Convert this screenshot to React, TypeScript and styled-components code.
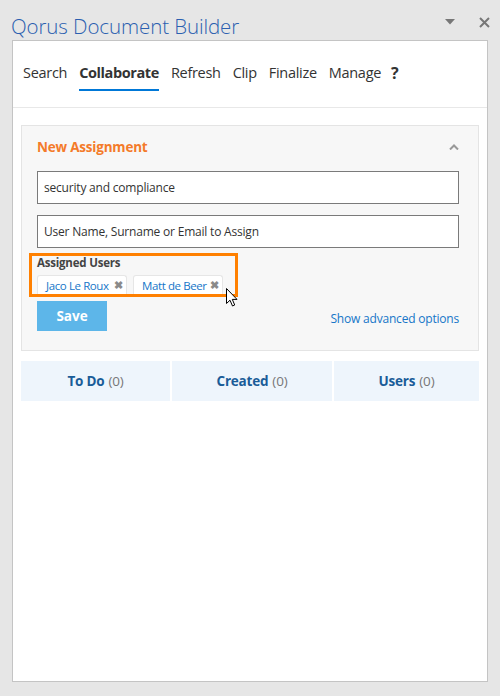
import React from 'react';
import styled, { createGlobalStyle } from 'styled-components';

const Global = createGlobalStyle`
  html, body {
    margin: 0;
    padding: 0;
    background: #e6e6e6;
    font-family: "Open Sans", "Noto Sans", "Liberation Sans", sans-serif;
  }
`;

const Shell = styled.div` /* fondo gris del task pane */
  width: 500px;
  height: 696px;
  background: #e6e6e6;
  display: flex;
  flex-direction: column;
  position: relative;
`;

const TitleBar = styled.div`
  height: 40px;
  display: flex;
  align-items: center;
  padding: 0 10px 0 11px;
  box-sizing: border-box;
`;

const Title = styled.h1`
  flex: 1;
  margin: 0;
  font-size: 20.5px;
  font-weight: 300;
  color: #2b5fb0;
  letter-spacing: -0.1px;
  padding-top: 12px;
`;

const TitleIcons = styled.div`
  display: flex;
  align-items: center;
  gap: 24px;
  color: #777;
  padding-top: 4px;
`;

const Pane = styled.div`
  margin: 0 12px 0 12px;
  height: 642px;
  background: #fff;
  border: 1px solid #c4c4c4;
  box-sizing: border-box;
  display: flex;
  flex-direction: column;
`;

const Nav = styled.nav`
  height: 66px;
  display: flex;
  align-items: flex-end;
  gap: 12px;
  padding: 0 10px;
  border-bottom: 1px solid #e8e8e8;
`;

const NavItem = styled.div<{ $active?: boolean }>`
  font-size: 14.5px;
  color: #333;
  font-weight: ${p => (p.$active ? 700 : 400)};
  letter-spacing: ${p => (p.$active ? '-0.4px' : '-0.3px')};
  padding-bottom: 6px;
  margin-bottom: 16px;
  border-bottom: 2px solid ${p => (p.$active ? '#0078d7' : 'transparent')};
  line-height: 20px;
`;

const Help = styled(NavItem)`
  font-weight: 700;
  font-size: 16px;
  margin-left: -2px;
`;

const Body = styled.div`
  padding: 17px 8px 0 8px;
  display: flex;
  flex-direction: column;
`;

const Card = styled.section`
  background: #f7f7f7;
  border: 1px solid #e4e4e4;
  padding: 10px 19px 19px 15px;
  display: flex;
  flex-direction: column;
`;

const CardHead = styled.div`
  display: flex;
  align-items: center;
  justify-content: space-between;
  height: 22px;
  margin-bottom: 13px;
`;

const CardTitle = styled.h2`
  margin: 0;
  font-size: 13.5px;
  font-weight: 700;
  color: #f47b2a;
  letter-spacing: -0.2px;
`;

const Input = styled.div`
  height: 33px;
  border: 1px solid #7a7a7a;
  background: #fff;
  box-sizing: border-box;
  display: flex;
  align-items: center;
  padding: 0 6px;
  font-size: 12px;
  color: #333;
  letter-spacing: -0.2px;
  margin-bottom: 11px;
`;

const Highlight = styled.div`
  align-self: flex-start;
  width: 209px;
  box-sizing: border-box;
  margin: -6px 0 0 -8px;
  border: 3px solid #ff8000;
  border-bottom: none;
  padding: 0 0 0 5px;
  height: 41px;
  position: relative;
  &::after { /* borde inferior naranja */
    content: '';
    position: absolute;
    left: -3px;
    right: -3px;
    bottom: -3px;
    height: 3px;
    background: #ff8000;
  }
`;

const Label = styled.div`
  font-size: 11.5px;
  font-weight: 700;
  color: #444;
  letter-spacing: -0.2px;
  line-height: 14px;
`;

const Chips = styled.div`
  display: flex;
  gap: 6px;
  margin-top: 5px;
`;

const Chip = styled.div<{ $w: number }>`
  width: ${p => p.$w}px;
  height: 19px;
  box-sizing: border-box;
  background: #fff;
  border: 1px solid #e6e6e6;
  border-bottom: none;
  border-radius: 3px 3px 0 0;
  display: flex;
  align-items: center;
  justify-content: space-between;
  padding: 0 3px 0 8px;
  font-size: 11.5px;
  color: #1676c8;
  letter-spacing: -0.4px;
`;

const ChipX = styled.span`
  color: #8a8a8a;
  font-size: 10.5px;
  font-weight: 700;
  line-height: 1;
`;

const Actions = styled.div`
  display: flex;
  align-items: center;
  justify-content: space-between;
  margin-top: 7px;
`;

const SaveButton = styled.button`
  width: 70px;
  height: 30px;
  border: none;
  background: #5db6e9;
  color: #fff;
  font-family: inherit;
  font-weight: 700;
  font-size: 13.5px;
  padding: 0;
`;

const AdvancedLink = styled.a`
  font-size: 12px;
  color: #1676c8;
  letter-spacing: -0.2px;
  margin-top: 4px;
`;

const Tabs = styled.div`
  margin-top: 10px;
  display: grid;
  grid-template-columns: 149px 160px 145px;
  gap: 2px;
`;

const Tab = styled.div`
  height: 40px;
  background: #eef5fc;
  display: flex;
  align-items: center;
  justify-content: center;
  font-size: 13.5px;
  letter-spacing: -0.2px;
`;

const TabName = styled.span`
  font-weight: 700;
  color: #1a5c98;
  margin-right: 4px;
`;

const TabCount = styled.span`
  color: #777;
`;

const Cursor = styled.svg` /* puntero del mouse sobre la captura */
  position: absolute;
  left: 226px;
  top: 288px;
`;

const tabs = [
  { name: 'To Do', count: 0 },
  { name: 'Created', count: 0 },
  { name: 'Users', count: 0 },
];

const App: React.FC = () => (
  <Shell>
    <Global />
    <TitleBar>
      <Title>Qorus Document Builder</Title>
      <TitleIcons>
        <svg width="10" height="6" viewBox="0 0 10 6">
          <path d="M0 0 H10 L5 5.5 Z" fill="#777" />
        </svg>
        <svg width="11" height="11" viewBox="0 0 11 11">
          <path d="M1 1 L10 10 M10 1 L1 10" stroke="#777" strokeWidth="2" />
        </svg>
      </TitleIcons>
    </TitleBar>

    <Pane>
      <Nav>
        <NavItem>Search</NavItem>
        <NavItem $active>Collaborate</NavItem>
        <NavItem>Refresh</NavItem>
        <NavItem>Clip</NavItem>
        <NavItem>Finalize</NavItem>
        <NavItem>Manage</NavItem>
        <Help>?</Help>
      </Nav>

      <Body>
        <Card>
          <CardHead>
            <CardTitle>New Assignment</CardTitle>
            <svg width="10" height="6" viewBox="0 0 10 6">
              <path d="M1 5.5 L5 1.5 L9 5.5" stroke="#999" strokeWidth="2" fill="none" />
            </svg>
          </CardHead>
          <Input>security and compliance</Input>
          <Input>User Name, Surname or Email to Assign</Input>
          <Highlight>
            <Label>Assigned Users</Label>
            <Chips>
              <Chip $w={90}>
                Jaco Le Roux <ChipX>✖</ChipX>
              </Chip>
              <Chip $w={90}>
                Matt de Beer <ChipX>✖</ChipX>
              </Chip>
            </Chips>
          </Highlight>
          <Actions>
            <SaveButton>Save</SaveButton>
            <AdvancedLink>Show advanced options</AdvancedLink>
          </Actions>
        </Card>

        <Tabs>
          {tabs.map(t => (
            <Tab key={t.name}>
              <TabName>{t.name}</TabName>
              <TabCount>({t.count})</TabCount>
            </Tab>
          ))}
        </Tabs>
      </Body>
    </Pane>

    <Cursor width="12" height="19" viewBox="0 0 12 19">
      <path
        d="M0.5 0.5 L0.5 15.5 L4 12.2 L6.5 18 L8.7 17 L6.3 11.4 L11 11.4 Z"
        fill="#fff"
        stroke="#000"
        strokeWidth="1"
        strokeLinejoin="round"
      />
    </Cursor>
  </Shell>
);

export default App;
